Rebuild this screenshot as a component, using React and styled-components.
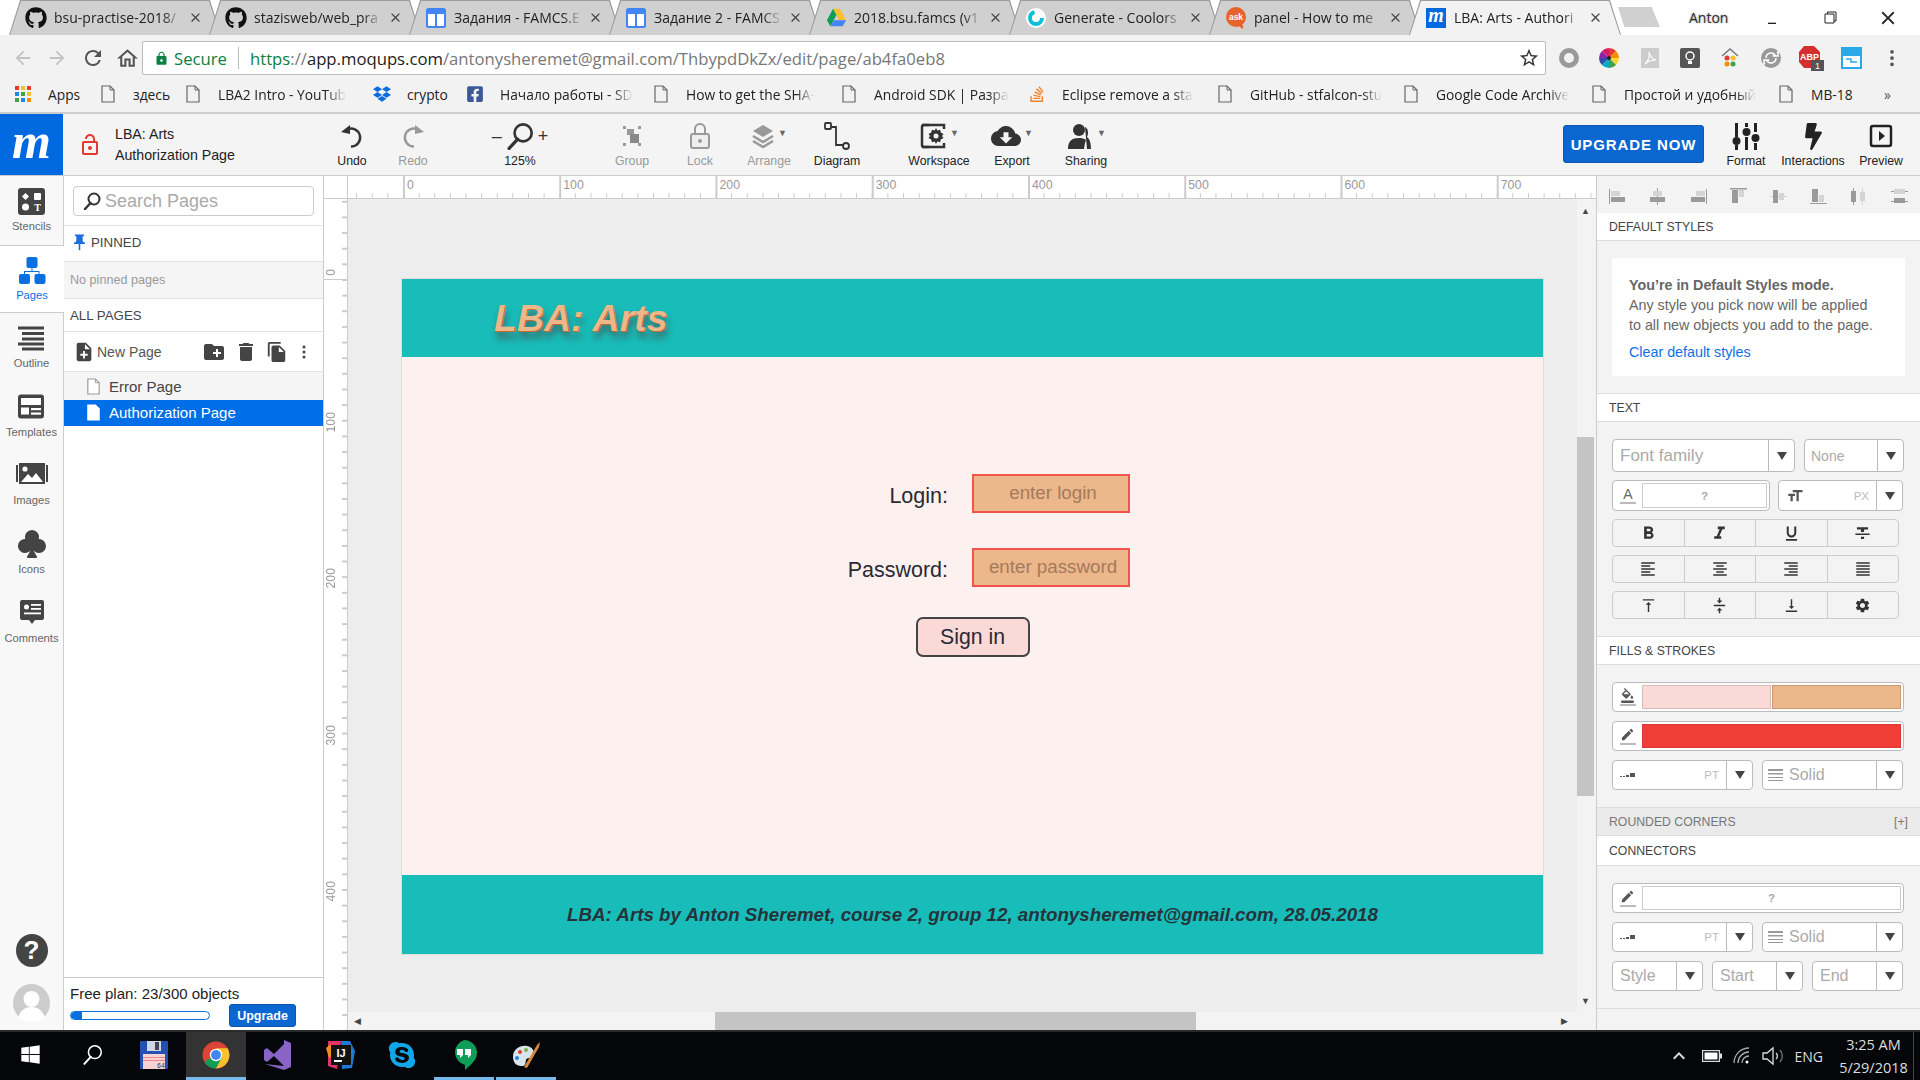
import React from "react";
import styled, { createGlobalStyle } from "styled-components";
import { FaGithub, FaDropbox, FaFacebookSquare, FaStackOverflow, FaWindows, FaSkype, FaBolt } from "react-icons/fa";
import { BsSuitClubFill, BsThreeDotsVertical } from "react-icons/bs";
import { MdFormatAlignLeft, MdFormatAlignCenter, MdFormatAlignRight, MdFormatAlignJustify, MdVerticalAlignTop, MdVerticalAlignCenter, MdVerticalAlignBottom, MdSettings, MdFormatColorFill, MdEdit, MdFormatStrikethrough, MdFormatUnderlined, MdFormatItalic, MdFormatBold, MdFormatSize, MdDelete, MdCreateNewFolder, MdFileCopy, MdNoteAdd, MdCloudDownload, MdArrowBack, MdArrowForward, MdRefresh, MdOutlineHome, MdStarBorder, MdLock, MdLockOpen, MdClose, MdMinimize, MdKeyboardArrowUp, MdPushPin } from "react-icons/md";

const Global = createGlobalStyle`
  html, body { margin: 0; width: 1920px; height: 1080px; overflow: hidden; background: #fff; }
  * { box-sizing: border-box; }
  body { font-family: "Liberation Sans", Arial, sans-serif; color: #333; }
  svg { display: block; flex: none; }
`;

const Screen = styled.div`display:flex;flex-direction:column;width:1920px;height:1080px;`;

/* ---------- browser chrome ---------- */
const TabStrip = styled.div`height:35px;display:flex;align-items:flex-end;padding-left:9px;background:#fff;position:relative;font-family:"Open Sans",sans-serif;`;
const Tab = styled.div`
  width:212px;height:35px;margin-right:-12px;position:relative;flex:none;
  background:#9c9c9c;clip-path:polygon(11px 0,calc(100% - 11px) 0,100% 100%,0 100%);
  &::before{content:"";position:absolute;inset:1px 1px 0;background:${p=>p.$active?"#f2f2f2":"#d0d0d0"};clip-path:polygon(11px 0,calc(100% - 11px) 0,100% 100%,0 100%);}
`;
const TabInner = styled.div`position:relative;display:flex;align-items:center;height:100%;padding-left:16px;font-size:14px;color:#222;`;
const TabIcon = styled.span`width:22px;height:22px;display:flex;align-items:center;justify-content:center;margin-right:7px;flex:none;`;
const TabTitle = styled.span`width:128px;white-space:nowrap;-webkit-mask-image:linear-gradient(90deg,#000 85%,transparent);mask-image:linear-gradient(90deg,#000 85%,transparent);`;
const TabClose = styled.span`margin-left:6px;color:#444;display:flex;`;
const NewTab = styled.div`width:42px;height:20px;margin-left:9px;margin-bottom:8px;background:#d0d0d0;clip-path:polygon(0 0,80% 0,100% 100%,15% 100%);flex:none;`;
const ProfileName = styled.div`font-size:14px;color:#333;position:absolute;left:1689px;top:8px;text-shadow:0 0 2px #888;`;
const WinControls = styled.div`position:absolute;right:3px;top:0;height:35px;display:flex;align-items:center;`;
const WinBtn = styled.div`width:58px;display:flex;justify-content:center;color:#222;`;

const AddressBar = styled.div`height:41px;background:#f2f2f2;display:flex;align-items:flex-start;padding-top:6px;color:#777;`;
const NavBtn = styled.div`width:${p=>p.$w}px;height:34px;display:flex;align-items:center;justify-content:center;color:${p=>p.$dim?"#c4c4c4":"#555"};flex:none;`;
const UrlBox = styled.div`width:1404px;height:34px;margin-left:5px;background:#fff;border:1px solid #bbb;border-radius:2px;display:flex;align-items:center;padding-left:11px;font:16.7px "Open Sans",sans-serif;white-space:nowrap;`;
const Secure = styled.span`color:#0b8043;display:flex;align-items:center;gap:5px;padding-right:11px;border-right:1px solid #bbb;height:22px;margin-right:11px;`;
const UrlDim = styled.span`color:#777;`;
const UrlGreen = styled.span`color:#0b8043;`;
const UrlDark = styled.span`color:#222;`;
const Star = styled.span`margin-left:auto;margin-right:5px;color:#333;`;
const Exts = styled.div`display:flex;flex:1;padding-left:3px;`;
const Ext = styled.div`width:40.3px;height:34px;display:flex;align-items:center;justify-content:center;`;

const BookmarkBar = styled.div`height:38px;background:#f2f2f2;border-bottom:2px solid #ccc;display:flex;align-items:center;padding-left:14px;font:13.8px "Open Sans",sans-serif;color:#222;`;
const Bookmark = styled.div`width:${p=>p.$w}px;flex:none;display:flex;align-items:center;gap:16px;`;
const BmIcon = styled.span`width:18px;height:20px;display:flex;align-items:center;justify-content:center;flex:none;`;
const BmText = styled.span`white-space:nowrap;flex:none;${p=>p.$fade&&"-webkit-mask-image:linear-gradient(90deg,#000 85%,transparent);mask-image:linear-gradient(90deg,#000 85%,transparent);"}`;
const More = styled.div`margin-left:6px;color:#555;`;

/* ---------- app toolbar ---------- */
const Toolbar = styled.div`height:62px;background:#f4f4f4;border-bottom:1px solid #ccc;display:flex;align-items:stretch;padding-right:4px;font-size:12.3px;color:#222;`;
const Logo = styled.div`width:63px;background:#0069e0;color:#fff;display:flex;align-items:center;justify-content:center;font:italic bold 50px "Liberation Serif",serif;line-height:1;padding-bottom:8px;flex:none;`;
const DocInfo = styled.div`width:259px;display:flex;align-items:center;padding-left:15px;gap:13px;flex:none;`;
const DocName = styled.div`font-size:14.2px;line-height:21px;color:#222;`;
const ToolItem = styled.div`width:${p=>p.$w}px;margin-left:${p=>p.$gap||0}px;flex:none;display:flex;flex-direction:column;align-items:center;padding-top:7px;color:${p=>p.$dim?"#999":"#222"};white-space:nowrap;`;
const ToolIcon = styled.div`height:30px;display:flex;align-items:center;justify-content:center;gap:1px;color:${p=>p.$dim?"#999":"#333"};margin-bottom:3px;`;
const Caret = styled.span`font-size:9px;color:#666;margin-left:2px;margin-top:-6px;`;
const ZoomMark = styled.span`font-size:18px;color:#333;margin:0 3px;`;
const UpgradeNow = styled.div`margin:11px 8px 0 auto;width:141px;height:38px;background:#0a66d0;border:1px solid #0a58b4;border-radius:3px;color:#fff;font-weight:bold;font-size:15px;letter-spacing:.9px;display:flex;align-items:center;justify-content:center;flex:none;`;

/* ---------- workspace ---------- */
const Workspace = styled.div`flex:1;display:flex;min-height:0;`;
const Rail = styled.div`width:64px;background:#f8f8f8;border-right:1px solid #ccc;display:flex;flex-direction:column;flex:none;`;
const RailItem = styled.div`height:68.6px;display:flex;flex-direction:column;align-items:center;padding-top:10px;font-size:11.2px;color:${p=>p.$active?"#0a6fe0":"#666"};
  ${p=>p.$active&&"background:#fff;margin-right:-1px;position:relative;border-top:1px solid #ccc;border-bottom:1px solid #ccc;padding-top:9px;"}`;
const RailGlyph = styled.div`height:30px;display:flex;align-items:center;justify-content:center;margin-bottom:4px;color:${p=>p.$active?"#0a6fe0":"#444"};`;
const RailFoot = styled.div`margin-top:auto;display:flex;flex-direction:column;align-items:center;gap:17px;padding-bottom:8px;`;
const Help = styled.div`width:32px;height:33px;border-radius:50%;background:#444;color:#fff;font:bold 26px "Liberation Sans",sans-serif;display:flex;align-items:center;justify-content:center;`;

const Panel = styled.div`width:260px;background:#fff;border-right:1px solid #ccc;display:flex;flex-direction:column;flex:none;`;
const SearchRow = styled.div`height:50px;padding:10px 9px;border-bottom:1px solid #e3e3e3;`;
const SearchBox = styled.div`height:30px;border:1px solid #ccc;border-radius:4px;display:flex;align-items:center;gap:4px;padding-left:9px;font-size:18px;color:#aaa;`;
const SectionHead = styled.div`height:${p=>p.$h}px;display:flex;align-items:center;gap:2px;padding-left:${p=>p.$pad}px;padding-bottom:${p=>p.$lift||0}px;font-size:13.3px;color:#444;border-bottom:1px solid #e3e3e3;`;
const EmptyNote = styled.div`height:37px;background:#f5f5f5;border-bottom:1px solid #e3e3e3;display:flex;align-items:center;padding-left:6px;font-size:12.6px;color:#999;`;
const PageTools = styled.div`height:40px;display:flex;align-items:center;padding:0 11px 0 9px;font-size:14px;color:#555;border-bottom:1px solid #e3e3e3;`;
const NewPage = styled.div`display:flex;align-items:center;gap:2px;margin-right:auto;`;
const PageIcons = styled.div`display:flex;align-items:center;gap:8px;color:#444;`;
const PageRow = styled.div`height:${p=>p.$h}px;display:flex;align-items:center;gap:8px;padding-left:22px;padding-bottom:${p=>p.$active?2:0}px;font-size:15px;background:${p=>p.$active?"#006ee6":"#f5f5f5"};color:${p=>p.$active?"#fff":"#444"};`;
const PageSpacer = styled.div`flex:1;`;
const PlanBox = styled.div`height:53px;border-top:1px solid #ccc;padding:7px 0 0 6px;`;
const PlanText = styled.div`font-size:15px;color:#222;line-height:17px;`;
const PlanRow = styled.div`display:flex;align-items:flex-start;`;
const PlanBar = styled.div`width:140px;height:9px;margin-top:9px;border:1px solid #0a6fe0;border-radius:5px;overflow:hidden;`;
const PlanFill = styled.div`height:100%;background:#0a6fe0;`;
const UpgradeSmall = styled.div`width:67px;height:23px;margin-left:19px;margin-top:2px;background:#0a66d0;border:1px solid #0a58b4;border-radius:3px;color:#fff;font-size:12.5px;font-weight:bold;display:flex;align-items:center;justify-content:center;`;

const Stage = styled.div`flex:1;display:flex;flex-direction:column;min-width:0;`;
const TopBand = styled.div`height:23px;display:flex;flex:none;border-bottom:1px solid #ccc;`;
const Corner = styled.div`width:24px;border-right:1px solid #ccc;background:#fff;flex:none;`;
const TopRuler = styled.div`flex:1;overflow:hidden;display:flex;padding-left:55px;background-color:#fff;
  background-image:linear-gradient(90deg,#ccc 0 2px,transparent 2px),linear-gradient(90deg,#ccc 0 1px,transparent 1px);
  background-size:156.25px 100%,15.625px 5px;background-position:55px 0,55px 100%;background-repeat:repeat-x;`;
const TopLabel = styled.div`width:156.25px;flex:none;padding:2px 0 0 4px;font-size:12.3px;color:#999;`;
const MidBand = styled.div`flex:1;display:flex;min-height:0;`;
const LeftRuler = styled.div`width:24px;flex:none;border-right:1px solid #ccc;overflow:hidden;display:flex;flex-direction:column;background-color:#fff;
  background-image:linear-gradient(#ccc 0 1px,transparent 1px),linear-gradient(#ccc 0 2px,transparent 2px);
  background-size:100% 156.5px,5px 15.65px;background-position:0 80px,100% 80px;background-repeat:repeat-x,repeat-y;`;
const LeftLabel = styled.div`height:156.5px;flex:none;display:flex;align-items:flex-end;justify-content:center;padding:0 9px 3px 0;font-size:12.3px;color:#999;
  &:first-child{margin-top:-76.5px;}`;
const VertText = styled.span`writing-mode:vertical-rl;transform:rotate(180deg);`;
const MainCol = styled.div`flex:1;display:flex;flex-direction:column;min-width:0;`;
const CanvasRow = styled.div`flex:1;display:flex;min-height:0;`;
const Canvas = styled.div`flex:1;background:#ededed;padding:80px 0 0 54px;min-width:0;`;
const VScroll = styled.div`width:19px;flex:none;background:#f3f3f3;display:flex;flex-direction:column;align-items:flex-start;padding:7px 0 6px;color:#444;font-size:9px;line-height:10px;`;
const ScrollArrowV = styled.span`width:17px;text-align:center;`;
const ScrollThumbV = styled.div`width:17px;height:359px;background:#c4c4c4;margin-top:221px;margin-bottom:auto;`;
const HScroll = styled.div`height:18px;flex:none;background:#f3f3f3;display:flex;align-items:center;padding:0 28px 0 6px;color:#444;font-size:9px;`;
const ScrollThumbH = styled.div`width:481px;height:100%;background:#c4c4c4;margin-left:354px;margin-right:auto;`;

const MockPage = styled.div`width:1141px;height:675px;box-shadow:0 0 0 1px #ddd;display:flex;flex-direction:column;background:#fcf1ee;`;
const MockHeader = styled.div`height:78px;background:#18bcb9;display:flex;align-items:center;padding-left:92px;font:italic bold 37.5px "Liberation Sans",sans-serif;color:#ecb78a;text-shadow:1px 1px 0 #c8682c,2px 7px 7px rgba(80,60,60,.65);flex:none;`;
const MockBody = styled.div`flex:1;padding-top:117px;display:flex;flex-direction:column;`;
const FormRow = styled.div`display:grid;grid-template-columns:546px 158px;column-gap:24px;align-items:center;margin-bottom:${p=>p.$mb}px;`;
const FormLabel = styled.label`text-align:right;font-size:21.5px;color:#2a2a35;padding-top:5px;`;
const FormInput = styled.div`height:39px;background:#ecb78a;border:2px solid #f2544c;display:flex;align-items:center;justify-content:center;font-size:18.75px;color:#a57a5c;padding:0 0 2px 4px;`;
const SignIn = styled.div`align-self:center;width:114px;height:40px;border:2px solid #444;border-radius:7px;background:#fad9d7;color:#2a2a35;display:flex;align-items:center;justify-content:center;font-size:21.25px;`;
const MockFooter = styled.div`height:79px;background:#18bcb9;display:flex;align-items:center;justify-content:center;font:italic bold 18.75px "Liberation Sans",sans-serif;color:#25333a;flex:none;`;

/* ---------- right panel ---------- */
const Props = styled.div`width:324px;flex:none;background:#f3f3f3;border-left:1px solid #ccc;display:flex;flex-direction:column;`;
const AlignBar = styled.div`height:37px;display:flex;align-items:center;padding:3px 0 0 12px;`;
const AlignCell = styled.div`width:40.3px;flex:none;display:flex;`;
const PropHead = styled.div`height:${p=>p.$h||29}px;background:${p=>p.$muted?"#eaeaea":"#fff"};border-bottom:1px solid #ddd;border-top:${p=>p.$top?"1px solid #ddd":"0"};display:flex;align-items:center;justify-content:space-between;padding:0 12px 0 12px;font-size:12.25px;color:${p=>p.$muted?"#777":"#444"};flex:none;`;
const PropBody = styled.div`padding:17px 15px 17px 15px;display:flex;flex-direction:column;gap:${p=>p.$gap||9}px;border-bottom:${p=>p.$line?"1px solid #ddd":"0"};`;
const InfoCard = styled.div`background:#fff;height:118px;padding:17px 17px;font-size:14.3px;line-height:20px;color:#666;`;
const InfoLink = styled.div`color:#0f6fe8;margin-top:7px;`;
const FieldRow = styled.div`display:flex;gap:${p=>p.$gap||9}px;height:${p=>p.$h}px;flex:none;`;
const Field = styled.div`width:${p=>p.$w}px;height:100%;background:#fff;border:1px solid #bbb;border-radius:4px;display:flex;align-items:stretch;flex:none;color:#aaa;font-size:${p=>p.$fs||17}px;overflow:hidden;`;
const FieldLabel = styled.div`flex:1;display:flex;align-items:center;gap:6px;padding-left:${p=>p.$pad||7}px;min-width:0;white-space:nowrap;`;
const FieldUnit = styled.span`margin-left:auto;margin-right:7px;font-size:11.5px;color:#bbb;`;
const FieldArrow = styled.div`width:26px;border-left:1px solid #bbb;display:flex;align-items:center;justify-content:center;flex:none;&::after{content:"";border-left:5.5px solid transparent;border-right:5.5px solid transparent;border-top:8px solid #444;}`;
const SwatchIcon = styled.div`width:29px;display:flex;align-items:center;justify-content:center;color:#555;flex:none;`;
const Swatches = styled.div`flex:1;display:flex;gap:1px;padding:2px;padding-left:0;`;
const Swatch = styled.div`flex:1;background:${p=>p.$c};border:1px solid ${p=>p.$b};display:flex;align-items:center;justify-content:center;color:#aaa;font-weight:bold;font-size:11.5px;`;
const Segments = styled.div`width:287px;height:100%;border:1px solid #ccc;border-radius:4px;display:flex;`;
const Segment = styled.div`flex:1;display:flex;align-items:center;justify-content:center;color:#333;&+&{border-left:1px solid #ccc;}`;
const Filler = styled.div`flex:1;`;
const SwatchUnder = styled.div`display:flex;flex-direction:column;align-items:center;&::after{content:"";width:16px;height:2px;background:#bbb;margin-top:1px;}`;

/* ---------- taskbar ---------- */
const Taskbar = styled.div`height:50px;background:#04060a;border-top:2px solid #2a2a2c;display:flex;align-items:stretch;gap:2px;color:#ddd;font-family:"Open Sans",sans-serif;flex:none;`;
const TaskItem = styled.div`width:60px;display:flex;align-items:center;justify-content:center;background:${p=>p.$open?"#333":"transparent"};border-bottom:3px solid ${p=>p.$run?"#76b9ed":"transparent"};`;
const Tray = styled.div`margin-left:auto;display:flex;align-items:center;gap:11px;padding-right:6px;`;
const Lang = styled.div`font-size:14px;`;
const Clock = styled.div`font-size:14.5px;line-height:23px;text-align:center;width:80px;border-right:1px solid #444;height:48px;padding-top:1px;`;

/* ---------- drawn icons ---------- */
const V = ({ s = 24, w, h, box = "0 0 24 24", children, color = "currentColor" }) => (
  <svg width={w || s} height={h || s} viewBox={box} fill={color}>{children}</svg>
);
const DocOutline = ({ c = "#666", fill = "none", w = 14, h = 18 }) => (
  <V w={w} h={h} box="0 0 14 18" color="none"><path d="M1 1h8l4 4v12H1z" fill={fill} stroke={c} strokeWidth="1.2" /><path d="M9 1v4h4" fill="none" stroke={c} strokeWidth="1" /></V>
);
const SheetIcon = () => (
  <V s={20} box="0 0 20 20" color="none"><rect x="1" y="1" width="18" height="18" rx="1.5" fill="#fff" stroke="#4285f4" strokeWidth="2" /><rect x="1" y="1" width="18" height="5" fill="#4285f4" /><rect x="9" y="6" width="2" height="13" fill="#4285f4" /></V>
);
const DriveIcon = () => (
  <V s={21} box="0 0 24 24" color="none"><path d="M8 2h8l7 13h-8z" fill="#fbc02d" /><path d="M8 2 1 15l4 7 7-13z" fill="#0f9d58" /><path d="M5 22h14l4-7H9z" fill="#4285f4" /></V>
);
const CoolorsIcon = () => (
  <V s={20} box="0 0 20 20" color="none"><circle cx="10" cy="10" r="10" fill="#fff" /><circle cx="10" cy="10" r="6" stroke="#0bc0d8" strokeWidth="4" strokeDasharray="26 12" /></V>
);
const AskIcon = () => (
  <V s={22} box="0 0 22 22" color="none"><circle cx="11" cy="10" r="10" fill="#e8622c" /><path d="M12 18h6v4z" fill="#e8622c" /><text x="11" y="13" fontSize="8.5" fontFamily="Liberation Sans" fontWeight="bold" fill="#fff" textAnchor="middle">ask</text></V>
);
const MTile = styled.span`width:20px;height:20px;background:#0069e0;color:#fff;display:flex;align-items:center;justify-content:center;font:italic bold 20px "Liberation Serif",serif;padding-bottom:4px;`;
const AppsGrid = () => (
  <V s={16} box="0 0 16 16" color="none">
    {["#e53935","#fbc02d","#e53935","#1e88e5","#43a047","#fbc02d","#43a047","#1e88e5","#fb8c00"].map((c, i) => (
      <rect key={i} x={(i % 3) * 6} y={Math.floor(i / 3) * 6} width="4" height="4" fill={c} />
    ))}
  </V>
);
const WheelIcon = () => (
  <V s={20} box="0 0 20 20" color="none">
    {["#e53935","#fb8c00","#fdd835","#43a047","#00acc1","#3949ab","#8e24aa","#d81b60"].map((c, i) => (
      <path key={i} d="M10 10 L10 0 A10 10 0 0 1 17.07 2.93 Z" fill={c} transform={`rotate(${i * 45} 10 10)`} />
    ))}
    <circle cx="10" cy="10" r="2" fill="#222" />
  </V>
);
const StencilIcon = () => (
  <V s={27} box="0 0 27 27" color="none"><rect width="27" height="27" rx="3" fill="#444" /><rect x="16" y="5" width="7" height="7" rx="1" fill="#fff" /><path d="m7.500 5 3.500 3.500L7.500 12 4 8.500z" fill="#fff" /><circle cx="7.500" cy="19" r="3.500" fill="#fff" /><text x="19.500" y="23" fontSize="10" fontFamily="Liberation Serif" fontWeight="bold" fill="#fff" textAnchor="middle">T</text></V>
);
const PagesIcon = () => (
  <V s={28} box="0 0 28 28" color="#0a6fe0"><rect x="8.500" y="1" width="11" height="11" rx="2" /><rect x="1" y="18" width="11" height="10" rx="2" /><rect x="16.500" y="18" width="11" height="10" rx="2" /><path d="M13.500 12h1v3h7v3h-1v-2H7v2H6v-3h7.500z" /></V>
);
const OutlineIcon = () => (
  <V s={27} box="0 0 27 24" color="#444"><rect width="26" height="3" /><rect x="4" y="5.500" width="22" height="3" /><rect x="4" y="11" width="22" height="3" /><rect y="16" width="26" height="3" /><rect x="4" y="21" width="22" height="3" /></V>
);
const TemplateIcon = () => (
  <V s={27} box="0 0 27 24" color="none"><rect width="26" height="24" rx="3" fill="#444" /><rect x="3" y="3.500" width="20" height="7" fill="#fff" /><rect x="3" y="13" width="8" height="7" fill="#fff" /><rect x="13" y="13.500" width="10" height="2.200" fill="#fff" /><rect x="13" y="18" width="10" height="2.200" fill="#fff" /></V>
);
const ImageIcon = () => (
  <V w={32} h={24} box="0 0 32 24" color="none"><rect x="3" width="26" height="21" fill="#444" /><rect y="2" width="2" height="17" fill="#444" /><rect x="30" y="2" width="2" height="17" fill="#444" /><circle cx="9" cy="6" r="2.600" fill="#fff" /><path d="m5 19 7-8 4 4 4-5 7 9z" fill="#fff" /></V>
);
const CommentIcon = () => (
  <V s={26} box="0 0 26 26" color="none"><path d="M3 0h20a2 2 0 0 1 2 2v16a2 2 0 0 1-2 2h-7l-3 4-3-4H3a2 2 0 0 1-2-2V2a2 2 0 0 1 2-2z" fill="#444" /><circle cx="7.500" cy="7" r="2.500" fill="#fff" /><rect x="12" y="4" width="10" height="1.800" fill="#fff" /><rect x="12" y="8" width="10" height="1.800" fill="#fff" /><rect x="5" y="12.500" width="17" height="1.800" fill="#fff" /></V>
);
const Magnifier = ({ s = 18, c = "#333", sw = 2 }) => (
  <V s={s} box="0 0 18 18" color="none"><circle cx="11" cy="7" r="5.500" stroke={c} strokeWidth={sw} /><path d="M7.500 11 2 17" stroke={c} strokeWidth={sw + 0.4} strokeLinecap="round" /></V>
);
const CircleArrow = ({ mirror }) => (
  <V s={26} box="0 0 26 26" color="none">
    <g transform={mirror ? "translate(26 0) scale(-1 1)" : undefined}>
      <path d="M8 6.500a9 9 0 1 1 4 17" stroke="currentColor" strokeWidth="2.400" />
      <path d="M2 9 11 2v9z" fill="currentColor" />
    </g>
  </V>
);
const ArrangeIcon = () => (
  <V s={24} box="0 0 24 24" color="none"><path d="M12 1 22 7l-10 6L2 7z" fill="currentColor" /><path d="m2 12 10 6 10-6M2 17l10 6 10-6" stroke="currentColor" strokeWidth="2.600" /></V>
);
const GroupIcon = () => (
  <V s={24} box="0 0 24 24" color="#999"><rect x="3" y="2" width="3" height="3" /><rect x="18" y="2" width="3" height="3" /><rect x="3" y="19" width="3" height="3" /><rect x="18" y="19" width="3" height="3" /><path d="M7 5h7v6h-7z" /><rect x="10" y="10" width="9" height="9" fill="#888" /></V>
);
const LockIcon = () => (
  <V w={20} h={26} box="0 0 20 26" color="none"><path d="M5 11V6a5 5 0 0 1 10 0v5" stroke="#999" strokeWidth="2" /><rect x="1" y="11" width="18" height="14" rx="2" stroke="#999" strokeWidth="2" fill="#eee" /><circle cx="10" cy="18" r="2" fill="#999" /></V>
);
const DiagramIcon = () => (
  <V s={28} box="0 0 28 28" color="none"><rect x="2" y="1" width="6" height="6" rx="1" stroke="#333" strokeWidth="1.800" /><circle cx="23" cy="24" r="3" stroke="#333" strokeWidth="1.800" /><path d="M8 5h5v18h7" stroke="#333" strokeWidth="1.800" /></V>
);
const WorkspaceIcon = () => (
  <V s={28} box="0 0 28 28" color="none"><path d="M10 3H5a2 2 0 0 0-2 2v18a2 2 0 0 0 2 2h5" stroke="#333" strokeWidth="2.500" /><path d="M3 3h22v4M3 25h22v-4" stroke="#333" strokeWidth="2.500" /><g transform="translate(9 6)"><path d="M8 0l1.300 2.500 2.800-.7.7 2.800L15.500 6 14 8l1.500 2-2.700 1.400-.7 2.800-2.800-.7L8 16l-1.300-2.500-2.800.7-.7-2.800L.5 10 2 8 .5 6l2.700-1.400.7-2.800 2.800.7z" fill="#333" /><circle cx="8" cy="8" r="2.500" fill="#f4f4f4" /></g></V>
);
const SharingIcon = () => (
  <V s={28} box="0 0 28 28" color="#333"><circle cx="13" cy="8" r="6" /><path d="M2 27c0-8 4-11 11-11 3 0 5 .5 7 2l-1 3-1 6z" /><path d="M19 5c3 1 4 6 2 10 3 2 4 7 4 12h-4" fill="#333" /></V>
);
const FormatIcon = () => (
  <V s={28} box="0 0 28 28" color="#222"><rect x="3" y="1" width="3" height="14" /><rect x="13" y="1" width="3" height="4" /><rect x="22" y="1" width="3" height="9" /><circle cx="4.500" cy="19" r="4" /><circle cx="14.500" cy="10" r="4" /><circle cx="23.500" cy="16" r="4" /><rect x="3" y="23" width="3" height="5" /><rect x="13" y="15" width="3" height="13" /><rect x="22" y="21" width="3" height="7" /></V>
);
const PreviewIcon = () => (
  <V s={26} box="0 0 26 26" color="none"><rect x="3" y="3" width="20" height="20" rx="2" stroke="#222" strokeWidth="2.500" /><path d="m11 8 6 5-6 5z" fill="#222" /></V>
);
const AlignGlyph = ({ kind }) => {
  const d = "#9a9a9a", l = "#d4d4d4";
  const shapes = {
    0: <><rect x="0" y="1" width="1" height="15" fill={d}/><rect x="2" y="3" width="9" height="5" fill={l}/><rect x="2" y="9" width="14" height="5" fill={d}/></>,
    1: <><rect x="8" y="0" width="1" height="17" fill={d}/><rect x="4" y="3" width="9" height="5" fill={l}/><rect x="1" y="9" width="15" height="5" fill={d}/></>,
    2: <><rect x="16" y="1" width="1" height="15" fill={d}/><rect x="6" y="3" width="9" height="5" fill={l}/><rect x="1" y="9" width="14" height="5" fill={d}/></>,
    3: <><rect x="0" y="0" width="17" height="1.500" fill={d}/><rect x="2" y="2" width="6" height="13" fill={d}/><rect x="9" y="2" width="5" height="7" fill={l}/></>,
    4: <><rect x="0" y="8" width="17" height="1" fill={l}/><rect x="3" y="2" width="5" height="13" fill={d}/><rect x="9" y="5" width="5" height="7" fill={l}/></>,
    5: <><rect x="0" y="15" width="17" height="1" fill={d}/><rect x="2" y="1" width="6" height="13" fill={d}/><rect x="9" y="7" width="5" height="7" fill={l}/></>,
    6: <><rect x="2" y="0" width="1" height="17" fill={d}/><rect x="11" y="0" width="1" height="17" fill={l}/><rect x="0" y="3" width="5" height="11" fill={d}/><rect x="9" y="4" width="5" height="9" fill={l}/></>,
    7: <><rect x="0" y="3" width="17" height="1" fill={d}/><rect x="0" y="13" width="17" height="1" fill={d}/><rect x="3" y="1" width="11" height="5" fill={l}/><rect x="3" y="10" width="11" height="5" fill={d}/></>,
  };
  return <V s={17} box="0 0 17 17" color="none">{shapes[kind]}</V>;
};
const WeightIcon = () => (
  <V w={16} h={6} box="0 0 16 6" color="#555"><rect y="4" width="2" height="1"/><rect x="3" y="4" width="2" height="1"/><rect x="6" y="3" width="3" height="2"/><rect x="10" y="1" width="5" height="4"/></V>
);
const DashIcon = () => (
  <V w={15} h={12} box="0 0 15 12" color="#999"><rect width="15" height="2"/><rect y="4" width="15" height="1.500"/><rect y="8" width="15" height="1" /><rect y="11" width="15" height="1" /></V>
);
const FontColor = () => (
  <V w={16} h={18} box="0 0 16 18" color="#666"><text x="8" y="12" fontSize="14" fontFamily="Liberation Sans" textAnchor="middle">A</text><rect y="15" width="16" height="2" fill="#bbb"/></V>
);
const FloppyIcon = () => (
  <V s={30} box="0 0 30 30" color="none"><rect x="1" y="1" width="28" height="28" rx="1" fill="#2450b4"/><rect x="8" y="1" width="14" height="10" fill="#cfd6e6"/><rect x="16" y="2" width="4" height="8" fill="#445"/><rect x="4" y="14" width="22" height="15" fill="#f7d2d2"/><rect x="4" y="17" width="22" height="1" fill="#e88"/><rect x="4" y="20" width="22" height="1" fill="#e88"/><text x="22" y="28" fontSize="6.500" fontFamily="Liberation Mono" fill="#333" textAnchor="middle">64</text></V>
);
const ChromeIcon = () => (
  <V s={28} box="0 0 28 28" color="none"><circle cx="14" cy="14" r="13.500" fill="#db4437"/><path d="M14 14 2.300 20.800A13.500 13.500 0 0 0 14 27.500l6.800-11.700z" fill="#0f9d58"/><path d="M14 7.300h11.700A13.500 13.500 0 0 1 14 27.500L20 16z" fill="#fbc02d"/><circle cx="14" cy="14" r="6.200" fill="#fff"/><circle cx="14" cy="14" r="4.900" fill="#4285f4"/></V>
);
const VsIcon = () => (
  <V s={32} box="0 0 32 32" color="#8a63c6"><path d="M22 1l7 3v24l-7 3L3 25l19 2V5L12 15 5 9 2 11v10l3 2 7-6 10 10z"/></V>
);
const IjIcon = () => (
  <V s={30} box="0 0 30 30" color="none"><path d="M3 1h13l-4 28-9-3z" fill="#e0336b"/><path d="M16 1h9l5 10-3 17-10 1z" fill="#1e7ad8"/><path d="M1 8l5-4 3 11-5 3z" fill="#f28a1e"/><rect x="6" y="5" width="20" height="20" fill="#111"/><text x="16" y="17" fontSize="11" fontFamily="Liberation Sans" fontWeight="bold" fill="#fff" textAnchor="middle">IJ</text><rect x="9" y="20" width="8" height="2" fill="#fff"/></V>
);
const HangoutsIcon = () => (
  <V s={32} box="0 0 32 32" color="none"><path d="M16 1a13 13 0 0 1 13 13c0 8-8 13-12 17v-5A13 13 0 0 1 16 1z" fill="#0f9d58"/><path d="M9 10h6v6l-3 3v-3H9zM17 10h6v6l-3 3v-3h-3z" fill="#fff"/></V>
);
const PaintIcon = () => (
  <V s={32} box="0 0 32 32" color="none"><path d="M3 18C3 10 10 6 17 7c6 1 8 6 6 10-2 3-6 1-7 4-1 4 0 6-5 6-5 0-8-4-8-9z" fill="#d8e4ec"/><circle cx="10" cy="13" r="2" fill="#e53935"/><circle cx="16" cy="11" r="2" fill="#7cb342"/><circle cx="7" cy="19" r="2" fill="#1e88e5"/><path d="M14 28 27 6l3-3-1 5-12 21z" fill="#d88a3c"/></V>
);
const WifiIcon = () => (
  <V s={18} box="0 0 18 18" color="none"><path d="M1 16A15 15 0 0 1 16 1M5 16A11 11 0 0 1 16 5M9 16a7 7 0 0 1 7-7" stroke="#aaa" strokeWidth="1.300"/><circle cx="14" cy="15" r="1.500" fill="#fff"/></V>
);
const SpeakerIcon = () => (
  <V s={22} box="0 0 22 22" color="none"><path d="M1 8h4l6-5v16l-6-5H1z" stroke="#ddd" strokeWidth="1.300"/><path d="M14 8a4 4 0 0 1 0 6" stroke="#ddd" strokeWidth="1.300"/><path d="M18 5a9 9 0 0 1 0 12" stroke="#777" strokeWidth="1.300"/></V>
);
const BatteryIcon = () => (
  <V w={20} h={12} box="0 0 20 12" color="none"><rect x=".6" y=".6" width="16.800" height="10.800" stroke="#ddd" strokeWidth="1.200"/><rect x="2.500" y="2.500" width="13" height="7" fill="#fff"/><rect x="18" y="3.500" width="2" height="5" fill="#ddd"/></V>
);

/* ---------- data ---------- */
const tabs = [
  [<FaGithub size={22} color="#111" />, "bsu-practise-2018/"],
  [<FaGithub size={22} color="#111" />, "stazisweb/web_pra"],
  [<SheetIcon />, "Задания - FAMCS.E"],
  [<SheetIcon />, "Задание 2 - FAMCS"],
  [<DriveIcon />, "2018.bsu.famcs (v1"],
  [<CoolorsIcon />, "Generate - Coolors"],
  [<AskIcon />, "panel - How to me"],
];
const bookmarks = [
  [85, <AppsGrid />, "Apps"],
  [85, <DocOutline />, "здесь"],
  [189, <DocOutline />, "LBA2 Intro - YouTub", 1],
  [93, <FaDropbox size={18} color="#0d6be0" />, "crypto"],
  [186, <FaFacebookSquare size={18} color="#3b5998" />, "Начало работы - SD", 1],
  [188, <DocOutline />, "How to get the SHA-", 1],
  [188, <DocOutline />, "Android SDK | Разра", 1],
  [188, <FaStackOverflow size={18} color="#f48024" />, "Eclipse remove a sta", 1],
  [186, <DocOutline />, "GitHub - stfalcon-stu", 1],
  [188, <DocOutline />, "Google Code Archive", 1],
  [187, <DocOutline />, "Простой и удобный", 1],
  [101, <DocOutline />, "MB-18"],
];
const rail = [
  [<StencilIcon />, "Stencils"],
  [<PagesIcon />, "Pages", true],
  [<OutlineIcon />, "Outline"],
  [<TemplateIcon />, "Templates"],
  [<ImageIcon />, "Images"],
  [<BsSuitClubFill size={32} />, "Icons"],
  [<CommentIcon />, "Comments"],
];
const topLabels = [0, 100, 200, 300, 400, 500, 600, 700];
const leftLabels = [0, 100, 200, 300, 400];

const Sel = ({ w, label, fs, pad, unit, icon }) => (
  <Field $w={w} $fs={fs}>
    <FieldLabel $pad={pad}>{icon}{label}{unit && <FieldUnit>{unit}</FieldUnit>}</FieldLabel>
    <FieldArrow />
  </Field>
);
const ColorField = ({ w, icon, children }) => (
  <Field $w={w}><SwatchIcon>{icon}</SwatchIcon><Swatches>{children}</Swatches></Field>
);
const Seg = ({ items }) => (
  <Segments>{items.map((it, i) => <Segment key={i}>{it}</Segment>)}</Segments>
);

export default function App() {
  return (
    <Screen>
      <Global />
      <TabStrip>
        {tabs.map(([ic, t], i) => (
          <Tab key={i}><TabInner><TabIcon>{ic}</TabIcon><TabTitle>{t}</TabTitle><TabClose><MdClose size={15} /></TabClose></TabInner></Tab>
        ))}
        <Tab $active><TabInner><TabIcon><MTile>m</MTile></TabIcon><TabTitle>LBA: Arts - Authori</TabTitle><TabClose><MdClose size={15} /></TabClose></TabInner></Tab>
        <NewTab />
        <ProfileName>Anton</ProfileName>
        <WinControls>
          <WinBtn><MdMinimize size={16} /></WinBtn>
          <WinBtn><V s={13} box="0 0 13 13" color="none"><path d="M1 3h9v9H1zM3.500 3V1H12v9h-2" stroke="#222" strokeWidth="1" /></V></WinBtn>
          <WinBtn><MdClose size={22} /></WinBtn>
        </WinControls>
      </TabStrip>

      <AddressBar>
        <NavBtn $w={46} $dim><MdArrowBack size={22} /></NavBtn>
        <NavBtn $w={22} $dim><MdArrowForward size={22} /></NavBtn>
        <NavBtn $w={50}><MdRefresh size={24} /></NavBtn>
        <NavBtn $w={19}><MdOutlineHome size={25} /></NavBtn>
        <UrlBox>
          <Secure><MdLock size={15} />Secure</Secure>
          <UrlGreen>https</UrlGreen><UrlDim>://</UrlDim><UrlDark>app.moqups.com</UrlDark><UrlDim>/antonysheremet@gmail.com/ThbypdDkZx/edit/page/ab4fa0eb8</UrlDim>
          <Star><MdStarBorder size={22} /></Star>
        </UrlBox>
        <Exts>
          <Ext><V s={20} box="0 0 20 20" color="none"><circle cx="10" cy="10" r="7.500" stroke="#999" strokeWidth="5" /></V></Ext>
          <Ext><WheelIcon /></Ext>
          <Ext><V w={18} h={20} box="0 0 18 20" color="#ccc"><rect width="18" height="20" /><path d="M4 16c3-3 5-8 4-12 1 5 3 7 7 8-4 0-8 1-11 4z" fill="none" stroke="#fff" strokeWidth="1.200" /></V></Ext>
          <Ext><V s={20} box="0 0 20 20" color="#555"><rect width="20" height="20" rx="2" /><circle cx="10" cy="8" r="4" fill="none" stroke="#fff" strokeWidth="1.500" /><rect x="8" y="13" width="4" height="3" fill="#fff" /></V></Ext>
          <Ext><V s={22} box="0 0 22 22" color="none"><path d="M3 9l8-7 8 7" stroke="#777" strokeWidth="1.500" /><circle cx="8" cy="11" r="2.500" fill="#e53935" /><circle cx="14" cy="11" r="2.500" fill="#fbc02d" /><circle cx="8" cy="17" r="2.500" fill="#fb8c00" /><circle cx="14" cy="17" r="2.500" fill="#43a047" /></V></Ext>
          <Ext><V s={20} box="0 0 20 20" color="#999"><circle cx="10" cy="10" r="10" /><path d="M5 10a5 5 0 0 1 9-3l-2 1h5v-4l-1 1M15 10a5 5 0 0 1-9 3l2-1H3v4l1-1" fill="none" stroke="#fff" strokeWidth="1.500" /></V></Ext>
          <Ext><V s={26} box="0 0 26 26" color="none"><path d="M6 1h10l6 6v10l-6 6H6l-5-6V7z" fill="#d32f2f" /><text x="11.500" y="15" fontSize="9" fontWeight="bold" fontFamily="Liberation Sans" fill="#fff" textAnchor="middle">ABP</text><rect x="13" y="15" width="13" height="11" fill="#555" /><text x="19.500" y="24" fontSize="9" fontFamily="Liberation Sans" fill="#fff" textAnchor="middle">1</text></V></Ext>
          <Ext><V w={21} h={22} box="0 0 21 22" color="#29a9e8"><rect width="21" height="22" /><rect x="2" y="9" width="17" height="11" fill="#fff" /><path d="M5 12h5v3h6" fill="none" stroke="#29a9e8" strokeWidth="1.500" /></V></Ext>
          <Ext><BsThreeDotsVertical size={20} color="#555" /></Ext>
        </Exts>
      </AddressBar>

      <BookmarkBar>
        {bookmarks.map(([w, ic, t, f], i) => (
          <Bookmark key={i} $w={w}><BmIcon>{ic}</BmIcon><BmText $fade={f}>{t}</BmText></Bookmark>
        ))}
        <More>»</More>
      </BookmarkBar>

      <Toolbar>
        <Logo>m</Logo>
        <DocInfo>
          <MdLockOpen size={24} color="#e5392f" />
          <DocName>LBA: Arts<br />Authorization Page</DocName>
        </DocInfo>
        <ToolItem $w={60}><ToolIcon><CircleArrow /></ToolIcon>Undo</ToolItem>
        <ToolItem $w={62} $dim><ToolIcon $dim><CircleArrow mirror /></ToolIcon>Redo</ToolItem>
        <ToolItem $w={90} $gap={31}><ToolIcon><ZoomMark>–</ZoomMark><Magnifier s={28} sw={1.700} /><ZoomMark>+</ZoomMark></ToolIcon>125%</ToolItem>
        <ToolItem $w={68} $gap={33} $dim><ToolIcon $dim><GroupIcon /></ToolIcon>Group</ToolItem>
        <ToolItem $w={68} $dim><ToolIcon $dim><LockIcon /></ToolIcon>Lock</ToolItem>
        <ToolItem $w={70} $dim><ToolIcon $dim><ArrangeIcon /><Caret>▼</Caret></ToolIcon>Arrange</ToolItem>
        <ToolItem $w={66}><ToolIcon><DiagramIcon /></ToolIcon>Diagram</ToolItem>
        <ToolItem $w={80} $gap={29}><ToolIcon><WorkspaceIcon /><Caret>▼</Caret></ToolIcon>Workspace</ToolItem>
        <ToolItem $w={66}><ToolIcon><MdCloudDownload size={30} /><Caret>▼</Caret></ToolIcon>Export</ToolItem>
        <ToolItem $w={82}><ToolIcon><SharingIcon /><Caret>▼</Caret></ToolIcon>Sharing</ToolItem>
        <UpgradeNow>UPGRADE NOW</UpgradeNow>
        <ToolItem $w={68}><ToolIcon><FormatIcon /></ToolIcon>Format</ToolItem>
        <ToolItem $w={66}><ToolIcon><FaBolt size={27} color="#222" /></ToolIcon>Interactions</ToolItem>
        <ToolItem $w={70}><ToolIcon><PreviewIcon /></ToolIcon>Preview</ToolItem>
      </Toolbar>

      <Workspace>
        <Rail>
          {rail.map(([ic, t, a]) => (
            <RailItem key={t} $active={a}><RailGlyph $active={a}>{ic}</RailGlyph>{t}</RailItem>
          ))}
          <RailFoot>
            <Help>?</Help>
            <V w={37} h={38} box="0 0 37 38" color="none"><ellipse cx="18.500" cy="19" rx="18.500" ry="19" fill="#ccc" /><circle cx="18.500" cy="15" r="8" fill="#fff" /><path d="M5 34c2-8 8-11 13.500-11S30 26 32 34c-4 3-9 4-13.500 4S9 37 5 34z" fill="#fff" /></V>
          </RailFoot>
        </Rail>

        <Panel>
          <SearchRow><SearchBox><Magnifier />Search Pages</SearchBox></SearchRow>
          <SectionHead $h={36} $pad={6} $lift={2}><MdPushPin size={19} color="#1a6fe0" />PINNED</SectionHead>
          <EmptyNote>No pinned pages</EmptyNote>
          <SectionHead $h={33} $pad={6}>ALL PAGES</SectionHead>
          <PageTools>
            <NewPage><MdNoteAdd size={22} color="#444" />New Page</NewPage>
            <PageIcons>
              <MdCreateNewFolder size={24} />
              <MdDelete size={24} />
              <MdFileCopy size={22} />
              <BsThreeDotsVertical size={16} />
            </PageIcons>
          </PageTools>
          <PageRow $h={28}><DocOutline c="#999" fill="#fff" w={15} h={17} />Error Page</PageRow>
          <PageRow $h={26} $active><DocOutline c="#fff" fill="#fff" w={15} h={17} />Authorization Page</PageRow>
          <PageSpacer />
          <PlanBox>
            <PlanText>Free plan: 23/300 objects</PlanText>
            <PlanRow>
              <PlanBar><PlanFill style={{ width: `${(23 / 300) * 100}%` }} /></PlanBar>
              <UpgradeSmall>Upgrade</UpgradeSmall>
            </PlanRow>
          </PlanBox>
        </Panel>

        <Stage>
          <TopBand>
            <Corner />
            <TopRuler>{topLabels.map(n => <TopLabel key={n}>{n}</TopLabel>)}</TopRuler>
          </TopBand>
          <MidBand>
            <LeftRuler>{leftLabels.map(n => <LeftLabel key={n}><VertText>{n}</VertText></LeftLabel>)}</LeftRuler>
            <MainCol>
              <CanvasRow>
                <Canvas>
                  <MockPage>
                    <MockHeader>LBA: Arts</MockHeader>
                    <MockBody>
                      <FormRow $mb={35}><FormLabel>Login:</FormLabel><FormInput>enter login</FormInput></FormRow>
                      <FormRow $mb={30}><FormLabel>Password:</FormLabel><FormInput>enter password</FormInput></FormRow>
                      <SignIn>Sign in</SignIn>
                    </MockBody>
                    <MockFooter>LBA: Arts by Anton Sheremet, course 2, group 12, antonysheremet@gmail.com, 28.05.2018</MockFooter>
                  </MockPage>
                </Canvas>
                <VScroll><ScrollArrowV>▲</ScrollArrowV><ScrollThumbV /><ScrollArrowV>▼</ScrollArrowV></VScroll>
              </CanvasRow>
              <HScroll>◀<ScrollThumbH />▶</HScroll>
            </MainCol>
          </MidBand>
        </Stage>

        <Props>
          <AlignBar>{[0, 1, 2, 3, 4, 5, 6, 7].map(k => <AlignCell key={k}><AlignGlyph kind={k} /></AlignCell>)}</AlignBar>
          <PropHead $h={28}>DEFAULT STYLES</PropHead>
          <PropBody>
            <InfoCard>
              <b>You’re in Default Styles mode.</b><br />
              Any style you pick now will be applied<br />
              to all new objects you add to the page.
              <InfoLink>Clear default styles</InfoLink>
            </InfoCard>
          </PropBody>
          <PropHead $top>TEXT</PropHead>
          <PropBody $gap={8}>
            <FieldRow $h={33}><Sel w={183} label="Font family" /><Sel w={100} label="None" fs={14} pad={6} /></FieldRow>
            <FieldRow $h={31} $gap={8}>
              <ColorField w={158} icon={<FontColor />}><Swatch $c="#fff" $b="#ccc">?</Swatch></ColorField>
              <Sel w={125} icon={<MdFormatSize size={18} color="#555" />} unit="PX" label="" />
            </FieldRow>
            <FieldRow $h={28}><Seg items={[<MdFormatBold size={21} />, <MdFormatItalic size={21} />, <MdFormatUnderlined size={19} />, <MdFormatStrikethrough size={19} />]} /></FieldRow>
            <FieldRow $h={28}><Seg items={[<MdFormatAlignLeft size={18} />, <MdFormatAlignCenter size={18} />, <MdFormatAlignRight size={18} />, <MdFormatAlignJustify size={18} />]} /></FieldRow>
            <FieldRow $h={28}><Seg items={[<MdVerticalAlignTop size={17} />, <MdVerticalAlignCenter size={17} />, <MdVerticalAlignBottom size={17} />, <MdSettings size={17} />]} /></FieldRow>
          </PropBody>
          <PropHead $top>FILLS &amp; STROKES</PropHead>
          <PropBody>
            <FieldRow $h={30}>
              <ColorField w={292} icon={<SwatchUnder><MdFormatColorFill size={15} /></SwatchUnder>}>
                <Swatch $c="#fad9d7" $b="#dcbcba" /><Swatch $c="#ecb78a" $b="#c79a72" />
              </ColorField>
            </FieldRow>
            <FieldRow $h={30}>
              <ColorField w={292} icon={<SwatchUnder><MdEdit size={15} /></SwatchUnder>}><Swatch $c="#f13e36" $b="#d23a33" /></ColorField>
            </FieldRow>
            <FieldRow $h={30}>
              <Sel w={141} icon={<WeightIcon />} unit="PT" label="" />
              <Sel w={141} icon={<DashIcon />} label="Solid" fs={16} pad={5} />
            </FieldRow>
          </PropBody>
          <PropHead $top $muted $h={29}>ROUNDED CORNERS<span>[+]</span></PropHead>
          <PropHead $h={30}>CONNECTORS</PropHead>
          <PropBody $line>
            <FieldRow $h={30}>
              <ColorField w={292} icon={<SwatchUnder><MdEdit size={15} /></SwatchUnder>}><Swatch $c="#fff" $b="#ccc">?</Swatch></ColorField>
            </FieldRow>
            <FieldRow $h={30}>
              <Sel w={141} icon={<WeightIcon />} unit="PT" label="" />
              <Sel w={141} icon={<DashIcon />} label="Solid" fs={16} pad={5} />
            </FieldRow>
            <FieldRow $h={30}>
              <Sel w={91} label="Style" fs={16} />
              <Sel w={91} label="Start" fs={16} />
              <Sel w={91} label="End" fs={16} />
            </FieldRow>
          </PropBody>
          <Filler />
        </Props>
      </Workspace>

      <Taskbar>
        <TaskItem><FaWindows size={21} color="#fff" /></TaskItem>
        <TaskItem><Magnifier s={21} c="#fff" sw={1.300} /></TaskItem>
        <TaskItem><FloppyIcon /></TaskItem>
        <TaskItem $open $run><ChromeIcon /></TaskItem>
        <TaskItem><VsIcon /></TaskItem>
        <TaskItem><IjIcon /></TaskItem>
        <TaskItem><FaSkype size={30} color="#12a5e8" /></TaskItem>
        <TaskItem $run><HangoutsIcon /></TaskItem>
        <TaskItem $run><PaintIcon /></TaskItem>
        <Tray>
          <MdKeyboardArrowUp size={24} color="#ddd" />
          <BatteryIcon />
          <WifiIcon />
          <SpeakerIcon />
          <Lang>ENG</Lang>
          <Clock>3:25 AM<br />5/29/2018</Clock>
        </Tray>
      </Taskbar>
    </Screen>
  );
}
